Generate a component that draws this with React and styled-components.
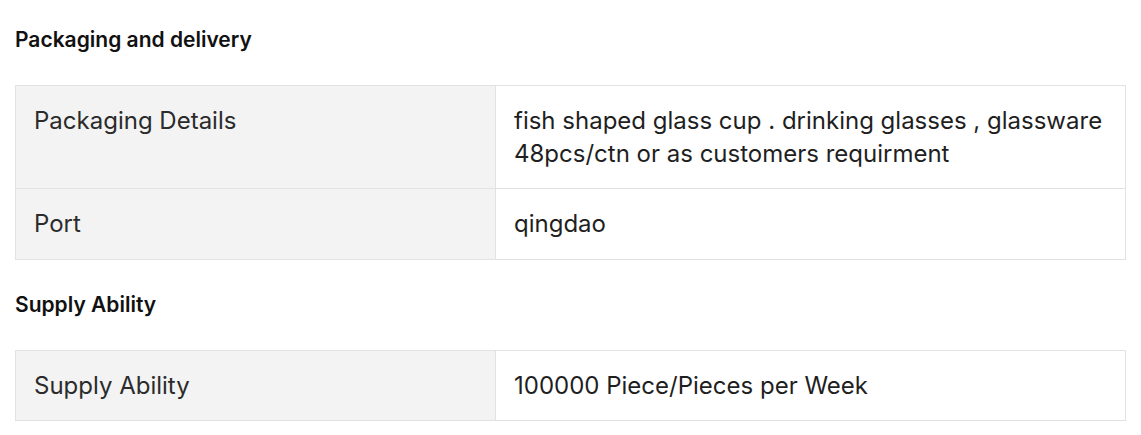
import React from "react";
import styled, { createGlobalStyle } from "styled-components";

const Global = createGlobalStyle`
  body { margin: 0; background: #fff; font-family: Inter, "Noto Sans", sans-serif; color: #222; }
`;

const Page = styled.div`
  padding: 27px 15px 0;
  width: 1111px;
`;

const Heading = styled.h3`
  margin: 0 0 33px;
  font-size: 21px; line-height: 25px; font-weight: 600; color: #111;
`;

const Table = styled.table`
  width: 100%;
  border-collapse: collapse;
  margin-bottom: 32px;
  &:last-child { margin-bottom: 0; }
`;

const Cell = styled.td`
  border: 1px solid #e2e2e2;
  padding: 19px 18px 18px;
  font-size: 24px; line-height: 32.5px;
  vertical-align: top;
  color: ${({ $label }) => ($label ? "#2b2b2b" : "#1f1f1f")};
  background: ${({ $label }) => ($label ? "#f3f3f3" : "#fff")};
  width: ${({ $label }) => ($label ? "443px" : "auto")};
`;

const SECTIONS = [
  {
    title: "Packaging and delivery",
    rows: [
      ["Packaging Details", "fish shaped glass cup . drinking glasses , glassware 48pcs/ctn or as customers requirment"],
      ["Port", "qingdao"],
    ],
  },
  {
    title: "Supply Ability",
    rows: [["Supply Ability", "100000 Piece/Pieces per Week"]],
  },
];

export default function App() {
  return (
    <Page>
      <Global />
      {SECTIONS.map((s) => (
        <React.Fragment key={s.title}>
          <Heading>{s.title}</Heading>
          <Table>
            <tbody>
              {s.rows.map(([k, v]) => (
                <tr key={k}>
                  <Cell $label>{k}</Cell>
                  <Cell>{v}</Cell>
                </tr>
              ))}
            </tbody>
          </Table>
        </React.Fragment>
      ))}
    </Page>
  );
}
